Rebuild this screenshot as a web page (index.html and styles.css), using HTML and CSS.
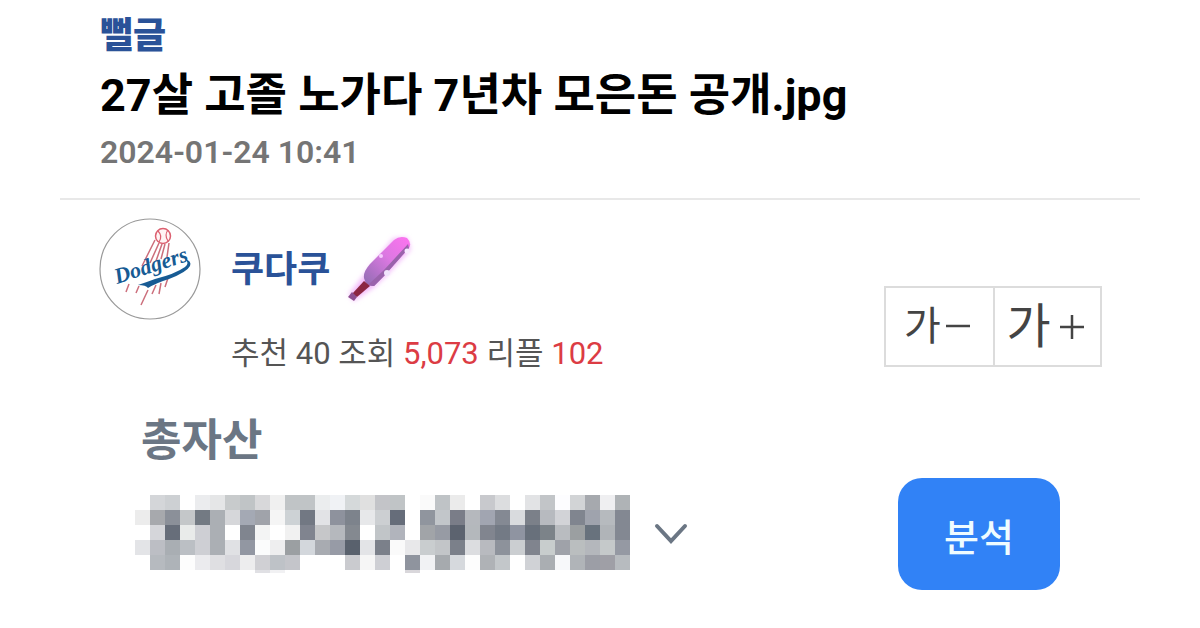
FILE: index.html
```html
<!DOCTYPE html>
<html lang="ko">
<head>
  <meta charset="UTF-8">
  <meta name="viewport" content="width=device-width, initial-scale=1">
  <title>27살 고졸 노가다 7년차 모은돈 공개.jpg</title>
  <link rel="stylesheet" href="styles.css">
</head>
<body>
<main class="post">
  <header class="post-head">
    <a class="category" href="#">뻘글</a>
    <h1 class="title">27살 고졸 노가다 7년차 모은돈 공개.jpg</h1>
    <time class="date" datetime="2024-01-24T10:41">2024-01-24 10:41</time>
  </header>

  <section class="author">
    <svg class="avatar" viewBox="0 0 102 102" role="img" aria-label="Dodgers">
      <circle cx="51" cy="51" r="50" fill="#fff" stroke="#999" stroke-width="1.2"/>
      <!-- 공 궤적 -->
      <g fill="none" stroke="#cc6f7c" stroke-width="1.5">
        <path d="M56 22L43 48M60 25L51 45M63 26L57 43M66 26L62 41M70 25L68 39"/>
        <path d="M30 66L27 74M40 68L37 75M49 72L42 87M57 67L53 76M62 65L60 76M69 60L66 69"/>
      </g>
      <circle cx="64" cy="18" r="7.5" fill="#fff4f4" stroke="#dc6070" stroke-width="1.5"/>
      <path d="M59 13Q64 18 60 24M69 12Q65 17 69 23" fill="none" stroke="#dc6070" stroke-width="1.2"/>
      <text class="avatar-name" x="18" y="66" transform="rotate(-18 18 66)">Dodgers</text>
      <path d="M39 67Q48 64 56 61Q76 56 86 49Q91 45 86 41Q93 43 91 48Q88 54 70 61Q57 65 49 70Q47 67 39 67Z" fill="#175b94"/>
    </svg>
    <div class="info">
      <div class="name-row">
        <a class="name" href="#">쿠다쿠</a>
        <svg class="bat" viewBox="0 4 76 76" aria-hidden="true">
          <defs>
            <linearGradient id="bat" x1="1" y1="0" x2="0" y2="1">
              <stop offset="0" stop-color="#ff72f0"/>
              <stop offset=".45" stop-color="#dc78e2"/>
              <stop offset="1" stop-color="#8d6cb0"/>
            </linearGradient>
            <filter id="glow" x="-30%" y="-30%" width="160%" height="160%">
              <feGaussianBlur stdDeviation="2.5"/>
            </filter>
            <filter id="soft">
              <feGaussianBlur stdDeviation=".7"/>
            </filter>
          </defs>
          <path d="M9 66L24 47L52 12L64 11L67 21L44 46L31 58L12 71Z" fill="#f3b8fa" stroke="#f3b8fa" stroke-width="3" filter="url(#glow)"/>
          <g filter="url(#soft)">
            <path d="M22 50Q21 44 28 36L52 12Q58 7 65 10Q70 15 67 20L43 47L32 58Q24 59 22 50Z" fill="url(#bat)"/>
            <path d="M66 16L67 20L43 47L32 58L26 57L42 42Z" fill="#9a64ac"/>
            <path d="M22 53L28 58L15 69L10 66Z" fill="#8b2842"/>
            <path d="M10 64L15 69L12 73L6 69Z" fill="#8c4f91"/>
            <circle cx="65" cy="23" r="2.5" fill="#f8eaff"/>
            <circle cx="45" cy="45" r="3" fill="#f1e4fc"/>
            <circle cx="39" cy="28" r="2" fill="#f7c9ff"/>
          </g>
        </svg>
      </div>
      <p class="stats">추천 40 조회 <em>5,073</em> 리플 <em>102</em></p>
    </div>
    <div class="font-size">
      <button type="button" class="smaller" aria-label="가 작게">가<svg viewBox="0 0 26 26" aria-hidden="true"><path d="M1 12H25"/></svg></button>
      <button type="button" class="bigger" aria-label="가 크게">가<svg viewBox="0 0 26 26" aria-hidden="true"><path d="M1 13H25M13 1V25"/></svg></button>
    </div>
  </section>

  <section class="asset">
    <h2 class="asset-label">총자산</h2>
    <div class="asset-row">
      <svg class="mosaic" id="mosaic" viewBox="0 0 495 78" shape-rendering="crispEdges" aria-hidden="true"></svg>
      <button type="button" class="toggle" aria-label="펼치기">
        <svg viewBox="0 0 34 22" aria-hidden="true"><path d="M3 3L17 18L31 3"/></svg>
      </button>
      <button type="button" class="analyze">분석</button>
    </div>
  </section>
</main>
<script src="mosaic.js"></script>
</body>
</html>
```
FILE: styles.css
```css
*{
    box-sizing: border-box;
    margin: 0;
    padding: 0;
}
body{
    background: #fff;
    color: #000;
    font-family: Roboto, "Noto Sans CJK KR", sans-serif;
}
a{
    text-decoration: none;
}
button{
    border: 0;
    background: none;
    font-family: inherit;
    cursor: pointer;
}
.post{
    padding: 14px 60px 36px;
}
.post-head{
    display: flex;
    flex-direction: column;
    align-items: flex-start;
    padding: 0 40px 28px;
    border-bottom: 2px solid #e8e8e8;
}
.category{
    color: #2a5298;
    font-size: 36px;
    font-weight: 900;
    line-height: 44px;
}
.title{
    font-size: 45px;
    font-weight: 700;
    line-height: 76px;
}
.date{
    color: #757575;
    font-size: 32px;
    font-weight: 600;
    line-height: 36px;
}
.author{
    display: flex;
    align-items: flex-start;
    padding: 18px 38px 0 39px;
}
.avatar{
    width: 102px;
    height: 102px;
    flex: none;
}
.avatar-name{
    fill: #175b94;
    font: italic 700 22px "Liberation Serif", serif;
}
.info{
    flex: 1;
    padding: 12px 0 0 30px;
}
.name-row{
    display: flex;
    align-items: center;
    gap: 12px;
    height: 80px;
}
.name{
    color: #2a5298;
    font-size: 36px;
    font-weight: 700;
    line-height: 44px;
}
.bat{
    width: 76px;
    height: 76px;
}
.stats{
    color: #555;
    font-size: 31px;
    line-height: 44px;
    margin-top: 22px;
}
.stats em{
    color: #dc3c44;
    font-style: normal;
}
.font-size{
    display: flex;
    margin-top: 68px;
    border: 2px solid #dcdcdc;
}
.font-size button{
    display: flex;
    align-items: center;
    justify-content: center;
    width: 107px;
    height: 77px;
    color: #444;
    line-height: 76px;
}
.font-size .smaller{
    gap: 4px;
    padding-right: 4px;
    font-size: 40px;
}
.font-size .bigger{
    gap: 8px;
    padding-right: 4px;
    border-left: 2px solid #dcdcdc;
    font-size: 48px;
}
.font-size svg{
    width: 26px;
    height: 26px;
    fill: none;
    stroke: #444;
    stroke-width: 2.5;
}
.asset{
    padding: 34px 80px 0 75px;
}
.asset-label{
    padding-left: 6px;
    color: #6b7684;
    font-size: 44px;
    font-weight: 700;
    line-height: 62px;
}
.asset-row{
    display: flex;
    align-items: center;
    height: 112px;
    margin-top: 6px;
}
.mosaic{
    width: 495px;
    height: 78px;
}
.toggle{
    width: 34px;
    height: 22px;
    margin-left: 24px;
}
.toggle svg{
    display: block;
    fill: none;
    stroke: #6b7684;
    stroke-width: 4;
    stroke-linecap: round;
}
.analyze{
    width: 162px;
    height: 112px;
    margin-left: auto;
    border-radius: 24px;
    background: #3182f6;
    color: #effcff;
    font-size: 38px;
    font-weight: 500;
}
```
FILE: mosaic.js
```js
// 금액 모자이크 색상표 (15px 칸)
let rows = [
  "ffffff d4d6d9 cdd0d3 ffffff ebecee e5e6e7 c8cbcc c0c4c6 d8d8da f0f0f0 c0c4c6 c0c4c6 ebedee f0f2f5 d5d9da e0e0e0 c3c4c8 c0c4c6 ffffff fafafa bfc3c6 ebebeb ffffff c8c9cd dcdddf ffffff e2e3e5 c2c5c8 fdfdff d2d4d6 a6a9ae efeff1 afb3b6",
  "ececec a7a9ad 8b9099 c4c7c9 737a83 abafb4 d6d7da a4a9b4 a0a3aa f5f5f5 cdd2d5 727883 e2e3e6 8e929d 7d838c e7e8ea cccfd2 666d7a ffffff 90959e c2c6ca 7a7d88 b5b8bd a1a5b1 848993 d9dbde 7b8089 b7babf d2d3d7 80858f 9fa3ad b6babe 838892",
  "ffffff d5d6da 676e7a e9ebea cecfd4 abafb4 ffffff 80858f f3f4f4 ffffff f1f1f1 80848f c6c7c9 b5b8bd 848990 ffffff c1c5c8 b1b4bc ffffff a1a4a8 979ba4 5c636f b4b8bc 81858f 737a85 8f94a1 68707b 7c8389 b9bcc0 9b9fa1 68727d b0b4b8 838892",
  "e3e4e7 bcbec4 a9aeb3 bbbfc4 cecfd4 abafb4 e0e1e4 9297a2 fbfcfc eeeeef 9b9fa2 d3d7dc a8abb1 979ba6 59616d e3e4e7 7b808a fafafa e8e8ea c9cdcf c2c5c8 7b808a dcdde0 b8babf 8d929b cbced1 80848e c8cdcd 9fa2a9 babebf b4b7bc c5c9ca 9599a3",
  "ffffff b6babf aeb3b8 fdfdfd ebebee dfdfe2 d7d7dc ededee d0d0d4 bec2c7 c4c5ca ffffff ffffff ffffff cacbcf f6f6f6 cecfd4 ffffff 8f949e f1f2f4 a6aaae d6d9dd fdfdfd afb2b6 c3c7ca ffffff d0d2d6 aaaeb2 f7f8fa b0b4b8 9c9ea6 9f9fa6 b7bbbf",
  "ffffff ffffff ffffff ffffff ffffff ffffff ffffff ffffff e0e0e4 f1f1f3 ffffff ffffff ffffff ffffff ffffff ffffff ffffff ffffff d9d7db"
];
let mosaic = document.querySelector("#mosaic");
rows.forEach(function (row, y){
  row.split(" ").forEach(function (color, x){
    let rect = document.createElementNS("http://www.w3.org/2000/svg", "rect");
    rect.setAttribute("x", x * 15);
    rect.setAttribute("y", y * 15);
    rect.setAttribute("width", 15);
    rect.setAttribute("height", 15);
    rect.setAttribute("fill", "#" + color);
    mosaic.appendChild(rect);
  });
});
```
